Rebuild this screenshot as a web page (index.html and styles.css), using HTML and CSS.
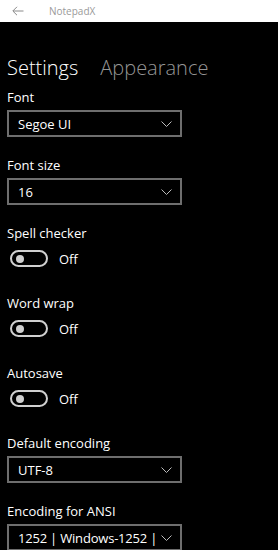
FILE: index.html
```html
<!DOCTYPE html>
<html lang="en">

<head>
    <meta charset="UTF-8">
    <meta name="viewport" content="width=device-width, initial-scale=1.0">
    <title>NotepadX</title>
    <link rel="stylesheet" href="styles.css">
</head>

<body>
    <div class="titlebar">
        <svg class="back" width="12" height="10" viewBox="0 0 12 10">
            <path d="M11.5 5H1M5 0.8L0.8 5L5 9.2" fill="none" stroke="#8a8a8a" stroke-width="1" />
        </svg>
        <span class="app-name">NotepadX</span>
    </div>

    <div class="content">
        <div class="tabs">
            <span class="tab active">Settings</span>
            <span class="tab">Appearance</span>
        </div>

        <div class="setting">
            <div class="label">Font</div>
            <div class="combo">
                <span>Segoe UI</span>
                <svg class="chevron" width="11" height="6" viewBox="0 0 11 6">
                    <path d="M0.5 0.5L5.5 5.5L10.5 0.5" fill="none" stroke="#bbb" stroke-width="1" />
                </svg>
            </div>
        </div>

        <div class="setting">
            <div class="label">Font size</div>
            <div class="combo">
                <span>16</span>
                <svg class="chevron" width="11" height="6" viewBox="0 0 11 6">
                    <path d="M0.5 0.5L5.5 5.5L10.5 0.5" fill="none" stroke="#bbb" stroke-width="1" />
                </svg>
            </div>
        </div>

        <div class="setting switch">
            <div class="label">Spell checker</div>
            <div class="toggle-row">
                <span class="toggle"><span class="knob"></span></span>
                <span>Off</span>
            </div>
        </div>

        <div class="setting switch">
            <div class="label">Word wrap</div>
            <div class="toggle-row">
                <span class="toggle"><span class="knob"></span></span>
                <span>Off</span>
            </div>
        </div>

        <div class="setting switch">
            <div class="label">Autosave</div>
            <div class="toggle-row">
                <span class="toggle"><span class="knob"></span></span>
                <span>Off</span>
            </div>
        </div>

        <div class="setting">
            <div class="label">Default encoding</div>
            <div class="combo">
                <span>UTF-8</span>
                <svg class="chevron" width="11" height="6" viewBox="0 0 11 6">
                    <path d="M0.5 0.5L5.5 5.5L10.5 0.5" fill="none" stroke="#bbb" stroke-width="1" />
                </svg>
            </div>
        </div>

        <div class="setting">
            <div class="label">Encoding for ANSI</div>
            <div class="combo">
                <span class="clip">1252 | Windows-1252 |</span>
                <svg class="chevron" width="11" height="6" viewBox="0 0 11 6">
                    <path d="M0.5 0.5L5.5 5.5L10.5 0.5" fill="none" stroke="#bbb" stroke-width="1" />
                </svg>
            </div>
        </div>
    </div>
</body>

</html>
```

FILE: styles.css
```css
/* General styles */
body {
    font-family: 'Open Sans', 'Noto Sans', sans-serif;
    margin: 0;
    padding: 0;
    background: #000000;
    color: #ffffff;
    height: 550px;
    overflow: hidden;
}

.titlebar {
    height: 22px;
    background: #ffffff;
    display: flex;
    align-items: center;
    padding-left: 12px;
}

.back {
    margin-right: 25px;
}

.app-name {
    font-size: 10px;
    color: #9a9a9a;
}

.content {
    padding: 32px 0 0 7px;
}

/* Page header */
.tabs {
    display: flex;
    gap: 22px;
    font-size: 20px;
    line-height: 28px;
    font-weight: 300;
    margin-bottom: 6px;
}

.tab {
    color: #959595;
}

.tab.active {
    color: #ffffff;
}

/* Setting rows */
.setting {
    margin-bottom: 19px;
}

.setting.switch {
    margin-bottom: 27px;
}

.label {
    font-size: 13px;
    line-height: 18px;
    margin-bottom: 4px;
}

.combo {
    box-sizing: border-box;
    width: 175px;
    height: 27px;
    border: 2px solid #6e6e6e;
    display: flex;
    align-items: center;
    justify-content: space-between;
    padding: 0 8px 0 9px;
    font-size: 13px;
}

.clip {
    overflow: hidden;
    white-space: nowrap;
    letter-spacing: -0.2px;
}

.chevron {
    flex-shrink: 0;
}

/* label margin collapses into this one */
.toggle-row {
    display: flex;
    align-items: center;
    gap: 11px;
    font-size: 13px;
    margin: 8px 0 0 3px;
    height: 17px;
}

.toggle {
    width: 38px;
    height: 17px;
    border: 2px solid #d0d0d0;
    border-radius: 10px;
    box-sizing: border-box;
    display: flex;
    align-items: center;
    padding-left: 4px;
}

.knob {
    width: 8px;
    height: 8px;
    border-radius: 50%;
    background: #d0d0d0;
}
```
